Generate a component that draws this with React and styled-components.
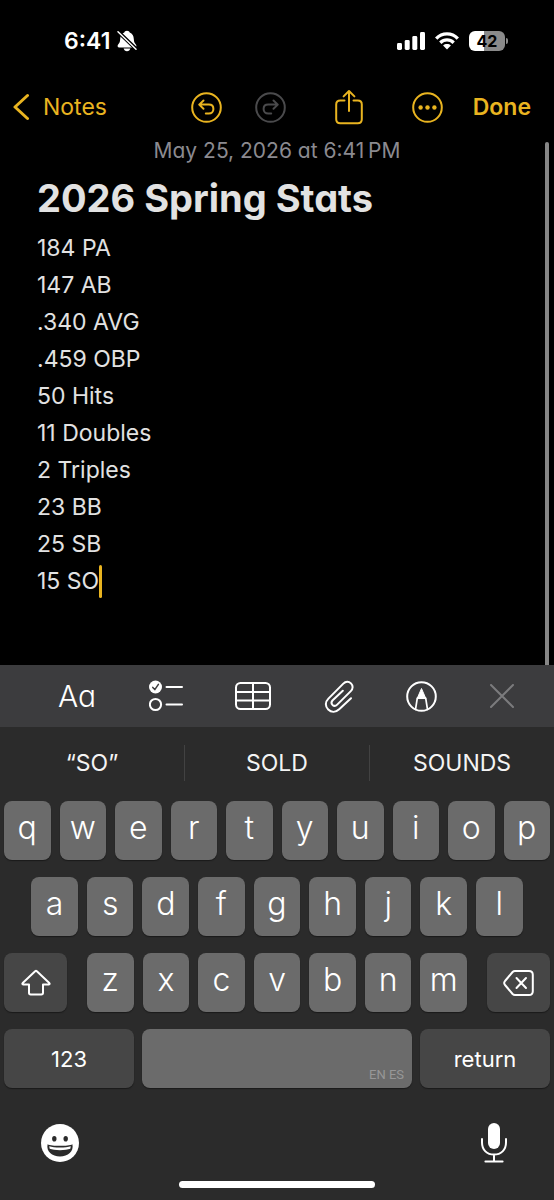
import React from "react";
import styled, { createGlobalStyle } from "styled-components";

const GlobalStyle = createGlobalStyle`
  * { box-sizing: border-box; }
  body {
    margin: 0;
    background: #000;
    color: #fff;
    font-family: Inter, "Liberation Sans", sans-serif;
  }
  button {
    margin: 0;
    padding: 0;
    border: 0;
    background: none;
    color: inherit;
    font: inherit;
    cursor: pointer;
  }
  svg { display: block; flex: none; }
`;

const Screen = styled.div`
  display: flex;
  flex-direction: column;
  min-height: 100vh;
`;

const StatusBar = styled.header`
  display: flex;
  align-items: center;
  justify-content: space-between;
  height: 82px;
  padding: 0 49px 0 64px;
`;

const StatusGroup = styled.div`
  display: flex;
  align-items: center;
  gap: ${(p) => p.$gap}px;
`;

const Clock = styled.time`
  font-size: 23px;
  font-weight: 600;
  line-height: 28px;
`;

const Battery = styled.div`
  position: relative;
  width: 36px;
  height: 20px;
  border-radius: 6px;
  background: linear-gradient(to right, #fff 42%, #8a8a8a 42%);
  color: #000;
  font-size: 16px;
  font-weight: 700;
  line-height: 20px;
  text-align: center;
  &::after {
    content: "";
    position: absolute;
    left: 37px;
    top: 7px;
    width: 2px;
    height: 6px;
    border-radius: 0 2px 2px 0;
    background: #8a8a8a;
  }
`;

const NavBar = styled.nav`
  display: flex;
  align-items: center;
  justify-content: space-between;
  height: 50px;
  padding: 0 23px 0 13px;
  color: #e9b420;
  font-size: 23px;
  line-height: 28px;
`;

const BackLink = styled.a`
  display: flex;
  align-items: center;
  gap: 13px;
  color: inherit;
  text-decoration: none;
`;

const NavActions = styled.div`
  display: flex;
  align-items: center;
  gap: ${(p) => p.$gap}px;
`;

const NavButton = styled.button`
  color: ${(p) => (p.disabled ? "#4a4a4c" : "inherit")};
  font-weight: ${(p) => (p.$strong ? 600 : 400)};
`;

const NoteArea = styled.main`
  display: flex;
  flex: 1;
  font-feature-settings: "cv11";
`;

const NoteColumn = styled.div`
  flex: 1;
  padding: 7px 0 0 37px;
`;

const NoteDate = styled.p`
  margin: 0 -9px 0 -37px;
  color: #8b8a90;
  font-size: 21px;
  line-height: 24px;
  text-align: center;
`;

const Editor = styled.div`
  outline: none;
  color: #e2e2e2;
`;

const Title = styled.h1`
  margin: 11px 0 8px;
  font-size: 38px;
  font-weight: 700;
  line-height: 48px;
`;

const Line = styled.p`
  display: flex;
  align-items: center;
  margin: 0;
  font-size: 23px;
  line-height: 37px;
`;

const Caret = styled.span`
  width: 3px;
  height: 33px;
  border-radius: 2px;
  background: #e9b420;
`;

const ScrollThumb = styled.div`
  width: 4px;
  margin: 10px 5px 0 0;
  border-radius: 2px 2px 0 0;
  background: #868686;
`;

const FormatBar = styled.div`
  display: flex;
  align-items: center;
  justify-content: space-between;
  height: 62px;
  padding: 0 40px 0 58px;
  background: #3c3c3e;
  font-feature-settings: "cv11";
  font-size: 30px;
`;

const FormatButton = styled.button`
  color: ${(p) => (p.$dim ? "#7b7b7d" : "#fff")};
  font-weight: 300;
`;

const Keyboard = styled.section`
  padding: 0 4px;
  background: #2b2b2b;
`;

const Suggestions = styled.div`
  display: flex;
  height: 72px;
  margin: 0 -4px 2px;
  align-items: center;
`;

const Suggestion = styled.button`
  flex: 1;
  height: 36px;
  color: #f4f4f4;
  font-size: 23px;
  & + & { border-left: 1px solid #424242; }
`;

const Rows = styled.div`
  display: flex;
  flex-direction: column;
  gap: 17px;
`;

const KeyRow = styled.div`
  display: flex;
  gap: 9px;
  padding: 0 ${(p) => (p.$inset ? "5%" : "0")};
`;

const ShiftRow = styled.div`
  display: grid;
  grid-template-columns: 63px 1fr 63px;
  gap: 20px;
`;

const SpaceRow = styled.div`
  display: grid;
  grid-template-columns: 130px 1fr 130px;
  gap: 8px;
`;

const BaseKey = styled.button`
  display: flex;
  align-items: center;
  justify-content: center;
  min-width: 0;
  height: 59px;
  border-radius: 8px;
  box-shadow: 0 1px 1px #1a1a1a;
`;

const LetterKey = styled(BaseKey)`
  flex: 1;
  padding-bottom: 6px;
  background: #6b6b6b;
  font-size: 32px;
  font-weight: 350;
`;

const ActionKey = styled(BaseKey)`
  background: #464646;
  font-size: 22px;
`;

const SpaceKey = styled(BaseKey)`
  align-items: flex-end;
  justify-content: flex-end;
  padding: 0 8px 4px;
  background: #6b6b6b;
  color: #979797;
  font-family: Roboto, "Liberation Sans", sans-serif;
  font-size: 13px;
  line-height: 18px;
`;

const KeyboardFooter = styled.div`
  display: flex;
  justify-content: space-between;
  align-items: center;
  height: 93px;
  padding: 17px 42px 0 37px;
`;

const HomeIndicator = styled.div`
  width: 36%;
  height: 7px;
  margin: 0 auto 12px;
  border-radius: 4px;
  background: #fff;
`;

const Icon = ({ w, h, sw = 2, children }) => (
  <svg
    width={w}
    height={h}
    viewBox={`0 0 ${w} ${h}`}
    fill="none"
    stroke="currentColor"
    strokeWidth={sw}
    strokeLinecap="round"
    strokeLinejoin="round"
    aria-hidden="true"
  >
    {children}
  </svg>
);

const BellOff = () => (
  <Icon w={20} h={22}>
    <path
      d="M10 0.8C8.5 0.8 7.6 1.6 7.3 2.6C4.6 3.6 3.3 6 3.2 9C3.1 12.2 2.3 13.1 1 14.7C0.1 15.9 0.6 17.4 2.2 17.4H17.8C19.4 17.4 19.9 15.9 19 14.7C17.7 13.1 16.9 12.2 16.8 9C16.7 6 15.4 3.6 12.7 2.6C12.4 1.6 11.5 0.8 10 0.8ZM6.6 18.6C7 20.3 8.3 21.2 10 21.2S13 20.3 13.4 18.6Z"
      fill="currentColor"
      stroke="none"
    />
    <path d="M1 1.5L19.5 19.5" stroke="#000" strokeWidth="3.8" />
    <path d="M1 1.8L19 19.2" strokeWidth="1.5" />
  </Icon>
);

const Signal = () => (
  <Icon w={28} h={18}>
    <g fill="currentColor" stroke="none">
      <rect x="0" y="11" width="5" height="7" rx="1.4" />
      <rect x="7.7" y="8" width="5" height="10" rx="1.4" />
      <rect x="15.3" y="4" width="5" height="14" rx="1.4" />
      <rect x="23" y="0" width="5" height="18" rx="1.4" />
    </g>
  </Icon>
);

const Wifi = () => (
  <Icon w={24} h={18}>
    <g strokeWidth="3.3" strokeLinecap="butt">
      <path d="M1.2 6.6C7.2 0.3 16.8 0.3 22.8 6.6" />
      <path d="M5.3 10.8C9.2 7 14.8 7 18.7 10.8" />
    </g>
    <path d="M12 17.4L8.1 13.5C10.3 11.6 13.7 11.6 15.9 13.5Z" fill="currentColor" stroke="none" />
  </Icon>
);

const Chevron = () => (
  <Icon w={17} h={28} sw={3}>
    <path d="M14.5 2.5L2 14L14.5 25.5" />
  </Icon>
);

const Undo = () => (
  <Icon w={31} h={31}>
    <circle cx="15.5" cy="15.5" r="14.3" />
    <path d="M12.5 8.5L8.2 12.6L12.5 16.7M8.6 12.6H17.8C20.6 12.6 22.4 14.4 22.4 17S20.6 21.6 17.8 21.6H14.8" />
  </Icon>
);

const Redo = () => (
  <Icon w={31} h={31}>
    <circle cx="15.5" cy="15.5" r="14.3" />
    <path d="M18.5 8.5L22.8 12.6L18.5 16.7M22.4 12.6H13.2C10.4 12.6 8.6 14.4 8.6 17S10.4 21.6 13.2 21.6H16.2" />
  </Icon>
);

const Share = () => (
  <Icon w={28} h={36} sw={2}>
    <path d="M9.5 11.5H5.2C2.6 11.5 1.2 12.9 1.2 15.5V30.2C1.2 32.8 2.6 34.2 5.2 34.2H22.8C25.4 34.2 26.8 32.8 26.8 30.2V15.5C26.8 12.9 25.4 11.5 22.8 11.5H18.5" />
    <path d="M14 22V2.4M8.6 7.4L14 2L19.4 7.4" />
  </Icon>
);

const More = () => (
  <Icon w={31} h={31}>
    <circle cx="15.5" cy="15.5" r="14.3" />
    <g fill="currentColor" stroke="none">
      <circle cx="8.6" cy="15.5" r="2.2" />
      <circle cx="15.5" cy="15.5" r="2.2" />
      <circle cx="22.4" cy="15.5" r="2.2" />
    </g>
  </Icon>
);

const Checklist = () => (
  <Icon w={34} h={32}>
    <circle cx="6.5" cy="7" r="6.5" fill="currentColor" stroke="none" />
    <path d="M3.8 7.4L5.8 9.6L9.4 4.4" stroke="#3c3c3e" strokeWidth="1.5" />
    <circle cx="6.5" cy="24.5" r="5.6" />
    <path d="M17.5 7H33M17.5 24.5H33" />
  </Icon>
);

const TableIcon = () => (
  <Icon w={36} h={28}>
    <rect x="1" y="1" width="34" height="26" rx="4.5" />
    <path d="M18 1V27M1 10H35M1 18.5H35" />
  </Icon>
);

const Paperclip = () => (
  <Icon w={30} h={33}>
    <path d="M27 18.2L15.2 29.2C11.8 32.4 7.4 32.6 4.2 29.5C1 26.4 1.1 21.9 4.4 18.6L19.3 3.6C21.6 1.3 24.8 1.3 27 3.4C29.2 5.6 29.1 8.8 26.8 11.1L13.2 24.6C11.7 26.1 9.8 26.1 8.5 24.9C7.2 23.6 7.3 21.8 8.7 20.3L18.8 10.8" />
  </Icon>
);

const PenCircle = () => (
  <Icon w={31} h={31}>
    <circle cx="15.5" cy="15.5" r="14.3" />
    <path d="M9.5 28.5L11.3 17.2H19.7L21.5 28.5" strokeWidth="1.7" />
    <path d="M11.3 17.2L15.5 7.5L19.7 17.2Z" fill="currentColor" strokeWidth="1" />
  </Icon>
);

const Close = () => (
  <Icon w={24} h={24}>
    <path d="M1 1L23 23M23 1L1 23" />
  </Icon>
);

const Shift = () => (
  <Icon w={30} h={27}>
    <path d="M14.4 2Q15 1.4 15.6 2L28.3 14Q29.2 15.3 27.8 15.5H22V23.8Q22 25.5 20.3 25.5H9.7Q8 25.5 8 23.8V15.5H2.2Q0.8 15.3 1.7 14Z" />
  </Icon>
);

const Backspace = () => (
  <Icon w={31} h={26}>
    <path d="M12 1H26Q29.8 1 29.8 4.8V21.2Q29.8 25 26 25H12Q10.6 25 9.6 24L2 15Q0.4 13 2 11L9.6 2Q10.6 1 12 1Z" />
    <path d="M13.5 8L23 18M23 8L13.5 18" />
  </Icon>
);

const Smiley = () => (
  <Icon w={38} h={38}>
    <circle cx="19" cy="19" r="19" fill="currentColor" stroke="none" />
    <g fill="#2b2b2b" stroke="none">
      <ellipse cx="13.3" cy="14.8" rx="2.2" ry="2.8" />
      <ellipse cx="24.7" cy="14.8" rx="2.2" ry="2.8" />
      <path d="M6.6 20.2C10.5 22.4 27.5 22.4 31.4 20.2C33 27.5 27 32.4 19 32.4S5 27.5 6.6 20.2Z" />
    </g>
    <path d="M8.2 22.2C13 24 25 24 29.8 22.2L29.3 24.7C25 26.6 13 26.6 8.7 24.7Z" fill="currentColor" stroke="none" />
  </Icon>
);

const Mic = () => (
  <Icon w={28} h={42} sw={2}>
    <rect x="8" y="1" width="12" height="26" rx="6" fill="currentColor" stroke="none" />
    <path d="M2 17V20.5C2 28 7 32.6 14 32.6S26 28 26 20.5V17M14 32.6V39.6M5.4 39.6H22.6" />
  </Icon>
);

const stats = [
  "184 PA",
  "147 AB",
  ".340 AVG",
  ".459 OBP",
  "50 Hits",
  "11 Doubles",
  "2 Triples",
  "23 BB",
  "25 SB",
  "15 SO",
];

const Letters = ({ text, inset }) => (
  <KeyRow $inset={inset}>
    {text.split("").map((c) => (
      <LetterKey key={c} type="button">{c}</LetterKey>
    ))}
  </KeyRow>
);

export default function App() {
  return (
    <Screen>
      <GlobalStyle />
      <StatusBar>
        <StatusGroup $gap={7}>
          <Clock>6:41</Clock>
          <BellOff />
        </StatusGroup>
        <StatusGroup $gap={10}>
          <Signal />
          <Wifi />
          <Battery>42</Battery>
        </StatusGroup>
      </StatusBar>

      <NavBar>
        <BackLink href="#notes">
          <Chevron />
          Notes
        </BackLink>
        <NavActions $gap={30}>
          <NavActions $gap={49}>
            <NavActions $gap={33}>
              <NavButton type="button" aria-label="Undo"><Undo /></NavButton>
              <NavButton type="button" aria-label="Redo" disabled><Redo /></NavButton>
            </NavActions>
            <NavButton type="button" aria-label="Share"><Share /></NavButton>
            <NavButton type="button" aria-label="More"><More /></NavButton>
          </NavActions>
          <NavButton type="button" $strong>Done</NavButton>
        </NavActions>
      </NavBar>

      <NoteArea>
        <NoteColumn>
          <NoteDate>May 25, 2026 at 6:41{"\u202f"}PM</NoteDate>
          <Editor contentEditable suppressContentEditableWarning role="textbox" aria-multiline="true" aria-label="Note">
            <Title>2026 Spring Stats</Title>
            {stats.map((s, i) => (
              <Line key={s}>
                {s}
                {i === stats.length - 1 && <Caret />}
              </Line>
            ))}
          </Editor>
        </NoteColumn>
        <ScrollThumb />
      </NoteArea>

      <FormatBar>
        <FormatButton type="button" aria-label="Text format">Aa</FormatButton>
        <FormatButton type="button" aria-label="Checklist"><Checklist /></FormatButton>
        <FormatButton type="button" aria-label="Table"><TableIcon /></FormatButton>
        <FormatButton type="button" aria-label="Attach"><Paperclip /></FormatButton>
        <FormatButton type="button" aria-label="Markup"><PenCircle /></FormatButton>
        <FormatButton type="button" aria-label="Close" $dim><Close /></FormatButton>
      </FormatBar>

      <Keyboard aria-label="Keyboard">
        <Suggestions>
          <Suggestion type="button">“SO”</Suggestion>
          <Suggestion type="button">SOLD</Suggestion>
          <Suggestion type="button">SOUNDS</Suggestion>
        </Suggestions>
        <Rows>
          <Letters text="qwertyuiop" />
          <Letters text="asdfghjkl" inset />
          <ShiftRow>
            <ActionKey type="button" aria-label="Shift"><Shift /></ActionKey>
            <Letters text="zxcvbnm" />
            <ActionKey type="button" aria-label="Delete"><Backspace /></ActionKey>
          </ShiftRow>
          <SpaceRow>
            <ActionKey type="button">123</ActionKey>
            <SpaceKey type="button">EN ES</SpaceKey>
            <ActionKey type="button">return</ActionKey>
          </SpaceRow>
        </Rows>
        <KeyboardFooter>
          <button type="button" aria-label="Emoji"><Smiley /></button>
          <button type="button" aria-label="Dictate"><Mic /></button>
        </KeyboardFooter>
        <HomeIndicator />
      </Keyboard>
    </Screen>
  );
}
